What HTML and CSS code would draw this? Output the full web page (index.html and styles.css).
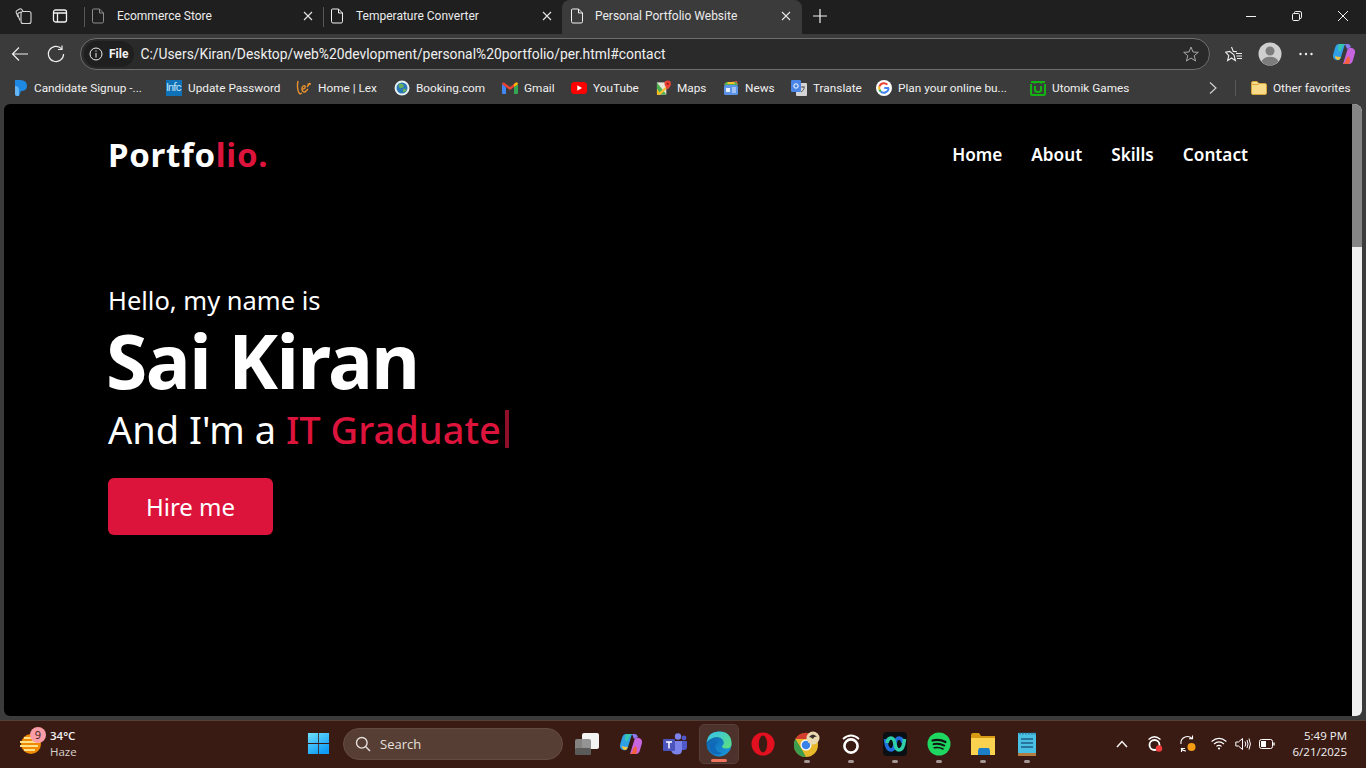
FILE: index.html
```html
<!DOCTYPE html>
<html lang="en">
<head>
    <meta charset="UTF-8">
    <meta name="viewport" content="width=device-width, initial-scale=1.0">
    <title>Personal Portfolio Website</title>
    <link rel="stylesheet" href="styles.css">
</head>
<body>
    <!-- Tab Strip -->
    <div class="tab-strip">
        <div class="strip-btn">
            <svg width="18" height="18" viewBox="0 0 18 18" fill="none" stroke="#d8d8d8" stroke-width="1.1"><rect x="6" y="4.5" width="10" height="12" rx="2"/><path d="M6 5 L3.5 6 Q2.4 6.6 2.8 7.8 L5 13.5"/><path d="M8 4.3 L6.5 2.2 Q5.6 1.4 4.6 2 L1.8 3.6 Q0.8 4.3 1.2 5.4 L3 10"/></svg>
        </div>
        <div class="strip-btn strip-btn-small">
            <svg width="16" height="16" viewBox="0 0 16 16" fill="none" stroke="#f2f2f2" stroke-width="1.3"><rect x="1.5" y="2" width="13" height="12" rx="2"/><path d="M1.5 5 H14.5 M5.5 5 V14"/></svg>
        </div>
        <div class="tab">
            <svg class="dim" width="14" height="16" viewBox="0 0 14 16" fill="none" stroke="currentColor" stroke-width="1"><path d="M2.5 1 H8.5 L12.5 5 V13.5 Q12.5 15 11 15 H3 Q1.5 15 1.5 13.5 V2 Q1.5 1 2.5 1 Z M8.5 1 V5 H12.5"/></svg>
            <span class="tab-title">Ecommerce Store</span>
            <svg class="tab-close" width="10" height="10" viewBox="0 0 10 10" stroke="#e6e6e6" stroke-width="1.1"><path d="M1 1 L9 9 M9 1 L1 9"/></svg>
        </div>
        <div class="tab">
            <svg width="14" height="16" viewBox="0 0 14 16" fill="none" stroke="currentColor" stroke-width="1"><path d="M2.5 1 H8.5 L12.5 5 V13.5 Q12.5 15 11 15 H3 Q1.5 15 1.5 13.5 V2 Q1.5 1 2.5 1 Z M8.5 1 V5 H12.5"/></svg>
            <span class="tab-title">Temperature Converter</span>
            <svg class="tab-close" width="10" height="10" viewBox="0 0 10 10" stroke="#e6e6e6" stroke-width="1.1"><path d="M1 1 L9 9 M9 1 L1 9"/></svg>
        </div>
        <div class="tab tab-active">
            <svg width="14" height="16" viewBox="0 0 14 16" fill="none" stroke="currentColor" stroke-width="1"><path d="M2.5 1 H8.5 L12.5 5 V13.5 Q12.5 15 11 15 H3 Q1.5 15 1.5 13.5 V2 Q1.5 1 2.5 1 Z M8.5 1 V5 H12.5"/></svg>
            <span class="tab-title">Personal Portfolio Website</span>
            <svg class="tab-close" width="10" height="10" viewBox="0 0 10 10" stroke="#e6e6e6" stroke-width="1.1"><path d="M1 1 L9 9 M9 1 L1 9"/></svg>
        </div>
        <div class="new-tab">
            <svg width="14" height="14" viewBox="0 0 14 14" stroke="#f2f2f2" stroke-width="1.2"><path d="M7 0 V14 M0 7 H14"/></svg>
        </div>
        <div class="window-controls">
            <svg width="10" height="10" viewBox="0 0 10 10" stroke="#f2f2f2" stroke-width="1"><path d="M0 5.5 H10"/></svg>
            <svg width="10" height="10" viewBox="0 0 10 10" fill="none" stroke="#f2f2f2" stroke-width="1"><rect x="0.5" y="2.5" width="7" height="7" rx="1.2"/><path d="M2.5 2.5 V1.5 Q2.5 0.5 3.5 0.5 H8 Q9.5 0.5 9.5 2 V6.5 Q9.5 7.5 8 7.5"/></svg>
            <svg width="10" height="10" viewBox="0 0 10 10" stroke="#f2f2f2" stroke-width="1"><path d="M0 0 L10 10 M10 0 L0 10"/></svg>
        </div>
    </div>

    <!-- Address Bar -->
    <div class="toolbar">
        <svg class="back-icon" width="18" height="16" viewBox="0 0 18 16" fill="none" stroke="#efefef" stroke-width="1.2"><path d="M17 8 H1.5 M8 1.5 L1.5 8 L8 14.5"/></svg>
        <svg class="reload-icon" width="18" height="18" viewBox="0 0 18 18" fill="none" stroke="#efefef" stroke-width="1.2"><path d="M14.6 3.8 A7.6 7.6 0 1 0 16.6 9"/><path d="M15 0.5 V4.5 H11"/></svg>
        <div class="address-bar">
            <div class="site-info">
                <svg width="14" height="14" viewBox="0 0 14 14" fill="none" stroke="#efefef" stroke-width="1"><circle cx="7" cy="7" r="6"/><path d="M7 6 V10.5 M7 3.5 V4.7"/></svg>
                <span>File</span>
            </div>
            <span class="url">C:/Users/Kiran/Desktop/web%20devlopment/personal%20portfolio/per.html#contact</span>
            <svg class="addr-star" width="16" height="16" viewBox="0 0 16 16" fill="none" stroke="#a8a8a8" stroke-width="1"><path d="M8 1 L10 6 L15.3 6.3 L11.2 9.7 L12.6 15 L8 12 L3.4 15 L4.8 9.7 L0.7 6.3 L6 6 Z"/></svg>
        </div>
        <div class="toolbar-icons">
            <svg width="18" height="16" viewBox="0 0 18 16" fill="none" stroke="#efefef" stroke-width="1.1"><path d="M6.5 1 L8.3 5.4 L12 5.8 M9 8.8 L10.4 14.6 L6.5 12 L2.6 14.6 L3.8 9.6 L0.6 6.2 L4.7 5.4 Z"/><path d="M11 7.5 H17 M11.5 10 H17 M12 12.5 H17"/></svg>
            <svg class="profile" width="24" height="24" viewBox="0 0 24 24"><circle cx="12" cy="12" r="11.5" fill="#cfcfcf"/><circle cx="12" cy="9" r="4.5" fill="#7c7c7c"/><path d="M3.5 19.5 Q5.5 14.8 12 14.8 Q18.5 14.8 20.5 19.5 Q16.5 23.5 12 23.5 Q7.5 23.5 3.5 19.5 Z" fill="#7c7c7c"/></svg>
            <svg width="14" height="4" viewBox="0 0 14 4" fill="#efefef"><circle cx="1.5" cy="2" r="1.2"/><circle cx="7" cy="2" r="1.2"/><circle cx="12.5" cy="2" r="1.2"/></svg>
            <svg class="copilot" width="24" height="22" viewBox="0 0 24 22"><path d="M7 1 H13 L9 14 Q8 18 4 17 Q0.5 16 1 12 L3 5 Q4 1 7 1 Z" fill="#2f9fe8"/><path d="M7 1 H13 Q10 3 9.5 7 L7 9 Q5 5 7 1 Z" fill="#36c6b0"/><path d="M11 21 H17 Q20 21 21 17 L23 10 Q23.5 6 20 5 Q16 4 15 8 L11 21 Z" fill="#c765e0"/><path d="M17 21 H11 Q14 19 14.5 15 L17 13 Q19 17 17 21 Z" fill="#f2603f"/><path d="M13 1 H16 Q18 1 19 4 L15 6 Z" fill="#8a7bf0"/><path d="M3 13 Q3 17 7 17 L9 14 Q5 14 3 13 Z" fill="#f7c23c"/></svg>
        </div>
    </div>

    <!-- Favorites Bar -->
    <div class="favorites">
        <div class="fav">
            <svg width="14" height="16" viewBox="0 0 14 16"><path d="M1 0 H6 Q13 0 13 6 Q13 11 7 11 L5 16 H3 Q1 16 1 14 Z" fill="#1e88e5"/><path d="M1 6 Q5 6 5 10 V16 H3 Q1 16 1 14 Z" fill="#64b5f6"/></svg>
            <span>Candidate Signup -...</span>
        </div>
        <div class="fav">
            <span class="info-logo">Infc</span>
            <span>Update Password</span>
        </div>
        <div class="fav">
            <svg width="16" height="16" viewBox="0 0 16 16" fill="none" stroke="#e8912d" stroke-width="1.4"><path d="M2 1 Q0.5 8 3 13 Q4 14.5 6 13"/><path d="M6 9 Q10 9 9 6 Q7 5 6 8 Q5.5 12 9 12 L12 9"/><path d="M11 7 L14 3 M11.5 4 H15"/></svg>
            <span>Home | Lex</span>
        </div>
        <div class="fav">
            <svg width="16" height="16" viewBox="0 0 16 16"><circle cx="8" cy="8" r="7.5" fill="#e8f1f2"/><circle cx="8" cy="8" r="5.5" fill="#2b78b8"/><path d="M5 4 Q9 3 10 6 Q8 9 6 8 Q4 7 5 4 Z M9 9 Q12 8 12.5 10 Q11 13 9 12 Z" fill="#66b15a"/></svg>
            <span>Booking.com</span>
        </div>
        <div class="fav">
            <svg width="16" height="12" viewBox="0 0 16 12"><path d="M0 2 L4 5 V12 H1 Q0 12 0 11 Z" fill="#4285f4"/><path d="M12 5 L16 2 V11 Q16 12 15 12 H12 Z" fill="#34a853"/><path d="M0 2 Q0 0 2 0.5 L8 5 L14 0.5 Q16 0 16 2 L8 8 Z" fill="#ea4335"/><path d="M12 5 L16 2 Q16 0 14 0.5 L12 2 Z" fill="#fbbc04"/></svg>
            <span>Gmail</span>
        </div>
        <div class="fav">
            <svg width="16" height="12" viewBox="0 0 16 12"><rect width="16" height="12" rx="3.5" fill="#f00"/><path d="M6.3 3.3 L11 6 L6.3 8.7 Z" fill="#fff"/></svg>
            <span>YouTube</span>
        </div>
        <div class="fav">
            <svg width="15" height="16" viewBox="0 0 16 16"><path d="M1 2 H11 V15 H1 Z" fill="#e8e4d8"/><path d="M1 2 L11 15 H5 L1 9 Z" fill="#4caf50"/><path d="M1 9 L5 15 H1 Z" fill="#fbbc04"/><path d="M1 15 L11 6 V9 L5 15 Z" fill="#fbc02d"/><path d="M12.5 0 Q16 0 16 3.5 Q16 6 12.5 9.5 Q9 6 9 3.5 Q9 0 12.5 0 Z" fill="#ea4335"/><circle cx="12.5" cy="3.5" r="1.2" fill="#8c1a12"/></svg>
            <span>Maps</span>
        </div>
        <div class="fav">
            <svg width="16" height="14" viewBox="0 0 16 14"><path d="M2 2 L14 0 L15 4 H1 Z" fill="#e8543f"/><path d="M1 4 L3 1 H13 L15 4 Z" fill="#4caf50"/><path d="M5 1 H11 L12 3 H4 Z" fill="#fbc02d"/><rect x="1" y="4" width="14" height="10" rx="1.5" fill="#5b93e8"/><rect x="3" y="7" width="4" height="4" fill="#e8f0fd"/><path d="M9 7 H13 M9 9 H13 M9 11 H13" stroke="#e8f0fd"/></svg>
            <span>News</span>
        </div>
        <div class="fav">
            <svg width="16" height="16" viewBox="0 0 16 16"><rect x="5" y="3" width="11" height="13" rx="1" fill="#d5d5d5"/><rect width="10" height="12" rx="1.2" fill="#4a86e8"/><circle cx="5" cy="6" r="2.2" fill="none" stroke="#fff"/><path d="M10 7 H14 M12 6 V8 M13.5 7.5 Q12.5 11 10 12" stroke="#666" fill="none"/></svg>
            <span>Translate</span>
        </div>
        <div class="fav">
            <svg width="16" height="16" viewBox="0 0 16 16"><circle cx="8" cy="8" r="8" fill="#fff"/><path d="M13 8 H8.2 M12.6 8.2 A4.8 4.8 0 0 1 4.8 11.6" fill="none" stroke="#4285f4" stroke-width="2"/><path d="M4.8 11.6 Q3.9 10.6 3.4 9.5" fill="none" stroke="#34a853" stroke-width="2"/><path d="M3.4 9.5 Q3 8 3.4 6.5" fill="none" stroke="#fbbc04" stroke-width="2"/><path d="M3.4 6.5 A4.8 4.8 0 0 1 11.4 4.6" fill="none" stroke="#ea4335" stroke-width="2"/></svg>
            <span>Plan your online bu...</span>
        </div>
        <div class="fav">
            <svg width="16" height="16" viewBox="0 0 16 16" fill="none" stroke="#12b312" stroke-width="2"><path d="M1 4 V14 Q1 15 2 15 H14 Q15 15 15 14 V4 M5 1 V2 Q5 3 4 3 M11 1 V2 Q11 3 12 3 M1 2 H15 M5 6 V10 Q5 12 8 12 Q11 12 11 10 V6"/></svg>
            <span>Utomik Games</span>
        </div>
        <svg class="fav-more" width="8" height="12" viewBox="0 0 8 12" fill="none" stroke="#d0d0d0" stroke-width="1.2"><path d="M1 0.5 L7 6 L1 11.5"/></svg>
        <div class="fav-sep"></div>
        <div class="fav">
            <svg width="16" height="14" viewBox="0 0 16 14"><path d="M0.5 2 Q0.5 0.5 2 0.5 H6 L8 2.5 H14 Q15.5 2.5 15.5 4 V12 Q15.5 13.5 14 13.5 H2 Q0.5 13.5 0.5 12 Z" fill="#f8dc8a" stroke="#d6a63c"/><path d="M1 3.5 H7.5" stroke="#d6a63c"/></svg>
            <span>Other favorites</span>
        </div>
    </div>

    <!-- Page Viewport -->
    <div class="viewport">
        <div class="page">
            <header class="navbar">
                <a class="logo" href="#">Portfo<span>lio.</span></a>
                <nav class="menu">
                    <a href="#">Home</a>
                    <a href="#">About</a>
                    <a href="#">Skills</a>
                    <a href="#">Contact</a>
                </nav>
            </header>
            <section class="hero">
                <div class="hello">Hello, my name is</div>
                <div class="name">Sai Kiran</div>
                <div class="role">And I'm a <span class="typed">IT Graduate</span><span class="cursor"></span></div>
                <a class="hire" href="#">Hire me</a>
            </section>
        </div>
        <div class="scrollbar"><div class="scroll-thumb"></div></div>
    </div>

    <!-- Taskbar -->
    <footer class="taskbar">
        <div class="weather">
            <div class="weather-icon">
                <svg width="22" height="20" viewBox="0 0 22 20"><circle cx="12" cy="10" r="10" fill="#f08a00"/><path d="M5 4 H20 M1 8 H21 M1 12 H19 M5 16 H16" stroke="#ffe08a" stroke-width="1.8"/></svg>
                <span class="weather-badge">9</span>
            </div>
            <div class="weather-text">
                <span class="temp">34°C</span>
                <span class="haze">Haze</span>
            </div>
        </div>
        <div class="task-center">
            <div class="task-btn">
                <svg width="23" height="23" viewBox="0 0 24 24"><defs><linearGradient id="win" x1="0" y1="0" x2="0.6" y2="1"><stop offset="0" stop-color="#6fe0ff"/><stop offset="1" stop-color="#0f9bf5"/></linearGradient></defs><path d="M1 1 H11.6 V11.6 H1 Z M12.4 1 H23 V11.6 H12.4 Z M1 12.4 H11.6 V23 H1 Z M12.4 12.4 H23 V23 H12.4 Z" fill="url(#win)"/></svg>
            </div>
            <div class="search">
                <svg width="16" height="16" viewBox="0 0 16 16" fill="none" stroke="#e6e0dc" stroke-width="1.4"><circle cx="6.8" cy="6.8" r="5.3"/><path d="M10.8 10.8 L15 15"/></svg>
                <span>Search</span>
            </div>
            <div class="task-btn">
                <svg width="24" height="22" viewBox="0 0 24 22"><rect x="7" y="0" width="17" height="16" rx="2" fill="#f4f4f4"/><rect x="0" y="6" width="16" height="16" rx="2" fill="#8b8b8b" opacity=".92"/><rect x="0" y="15" width="16" height="7" rx="2" fill="#5a5a5a"/></svg>
            </div>
            <div class="task-btn">
                <svg width="24" height="22" viewBox="0 0 24 22"><path d="M7 1 H13 L9 14 Q8 18 4 17 Q0.5 16 1 12 L3 5 Q4 1 7 1 Z" fill="#2f9fe8"/><path d="M7 1 H13 Q10 3 9.5 7 L7 9 Q5 5 7 1 Z" fill="#36c6b0"/><path d="M11 21 H17 Q20 21 21 17 L23 10 Q23.5 6 20 5 Q16 4 15 8 L11 21 Z" fill="#c765e0"/><path d="M17 21 H11 Q14 19 14.5 15 L17 13 Q19 17 17 21 Z" fill="#f2603f"/><path d="M13 1 H16 Q18 1 19 4 L15 6 Z" fill="#8a7bf0"/><path d="M3 13 Q3 17 7 17 L9 14 Q5 14 3 13 Z" fill="#f7c23c"/></svg>
            </div>
            <div class="task-btn">
                <svg width="24" height="22" viewBox="0 0 24 22"><circle cx="15" cy="3.5" r="3.2" fill="#7b83eb"/><circle cx="21" cy="5" r="2.4" fill="#5059c9"/><path d="M17 8 H24 V14 Q24 17 21 17 H17 Z" fill="#5059c9"/><path d="M8 8 H19 V17 Q19 21.5 14 21.5 Q9 21.5 8 17 Z" fill="#7b83eb"/><rect x="0" y="6" width="12" height="12" rx="1" fill="#4b53bc"/><path d="M3 9 H9 M6 9 V15.5" stroke="#fff" stroke-width="1.5"/></svg>
            </div>
            <div class="task-btn task-active">
                <svg width="26" height="26" viewBox="0 0 26 26"><defs><linearGradient id="edgeB" x1="0" y1="0" x2="1" y2="1"><stop offset="0" stop-color="#0c59a4"/><stop offset="1" stop-color="#1b9de2"/></linearGradient><linearGradient id="edgeG" x1="0" y1="0" x2="1" y2="1"><stop offset="0" stop-color="#35c1f1"/><stop offset="1" stop-color="#5ee07a"/></linearGradient></defs><circle cx="13" cy="13" r="12.5" fill="url(#edgeB)"/><path d="M0.6 11 Q2 0.5 13 0.5 Q25.5 0.5 25.5 13 Q25.5 17.5 20 17.5 Q16 17.5 16 15 Q19 13 17 9 Q14 5 8 6.5 Q3 8 0.6 11 Z" fill="url(#edgeG)"/><path d="M9 15 Q9 21 16 22 Q11 25 6 22 Q3 19 4.5 14 Q7 10 12 10 Q9 12 9 15 Z" fill="#1068b8"/></svg>
                <span class="active-pill"></span>
            </div>
            <div class="task-btn">
                <svg width="24" height="24" viewBox="0 0 24 24"><circle cx="12" cy="12" r="11.5" fill="#e3101f"/><ellipse cx="12" cy="12" rx="4.2" ry="8.5" fill="#3a1c14"/></svg>
            </div>
            <div class="task-btn task-open">
                <svg width="26" height="26" viewBox="0 0 26 26"><circle cx="12" cy="14" r="12" fill="#e8b82c"/><path d="M1.5 8 A12 12 0 0 1 22.5 8 H12 Z" fill="#d23d2f"/><path d="M12 26 A12 12 0 0 1 1.5 8 L7 17 Z" fill="#3c9d4e"/><circle cx="12" cy="14" r="5.5" fill="#fff"/><circle cx="12" cy="14" r="4.3" fill="#3b82e8"/><circle cx="19" cy="7" r="6.5" fill="#e9d9b0"/><path d="M15 6 Q19 1 23 6 Q20 5 19 8 Q17 6 15 6 Z" fill="#3a2f2a"/></svg>
            </div>
            <div class="task-btn task-open">
                <svg width="18" height="22" viewBox="0 0 18 22" fill="none" stroke="#fff" stroke-width="2.6"><circle cx="9" cy="13" r="6.6"/><path d="M1 6 Q9 -1 17 6" stroke-width="1.8"/></svg>
            </div>
            <div class="task-btn task-open">
                <svg width="24" height="24" viewBox="0 0 24 24" fill="none"><rect width="24" height="24" rx="4" fill="#0a0f14"/><path d="M2.5 7 Q3.5 18 8 18 Q11 18 12 12 Q13 6 16 6 Q19 6 20 11" stroke="#1f6fe0" stroke-width="3.6"/><path d="M21.5 7 Q20.5 18 16 18 Q13 18 12 12 Q11 6 8 6 Q5 6 4 11" stroke="#2fd0a8" stroke-width="3.6"/></svg>
            </div>
            <div class="task-btn task-open">
                <svg width="24" height="24" viewBox="0 0 24 24" fill="none" stroke="#111" stroke-linecap="round"><circle cx="12" cy="12" r="11.5" fill="#1ed760" stroke="none"/><path d="M5.5 8.5 Q12 6.5 18.5 10" stroke-width="2.2"/><path d="M6.5 12.2 Q12 10.8 17.3 13.6" stroke-width="1.9"/><path d="M7.2 15.8 Q12 14.6 16 17" stroke-width="1.5"/></svg>
            </div>
            <div class="task-btn task-open">
                <svg width="24" height="22" viewBox="0 0 24 22"><path d="M0 2 Q0 0 2 0 H8 L10 3 H24 V21 H0 Z" fill="#d69a15"/><path d="M0 5 H24 V22 H0 Z" fill="#fad24f"/><path d="M7 19 Q7 15 9 15 H17 Q19 15 19 19 V22 H7 Z" fill="#1c7ec6"/></svg>
            </div>
            <div class="task-btn task-open">
                <svg width="18" height="24" viewBox="0 0 18 24"><rect y="1" width="18" height="23" fill="#48bfe3"/><rect y="21" width="18" height="3" fill="#b67b3f"/><path d="M3 7 H15 M3 11 H15 M3 15 H15" stroke="#1c5d85" stroke-width="1.6"/><path d="M2 0 V2.5 M5 0 V2.5 M8 0 V2.5 M11 0 V2.5 M14 0 V2.5 M17 0 V2.5" stroke="#1c5d85"/></svg>
            </div>
        </div>
        <div class="tray">
            <svg width="12" height="8" viewBox="0 0 12 8" fill="none" stroke="#f4f4f4" stroke-width="1.5"><path d="M1 7 L6 1.5 L11 7"/></svg>
            <svg class="tray-obs" width="16" height="18" viewBox="0 0 16 18" fill="none" stroke="#fff" stroke-width="1.8"><circle cx="7.5" cy="10" r="5"/><path d="M1.5 4.5 Q7.5 -1 13.5 4.5" stroke-width="1.2"/><circle cx="12" cy="13.5" r="3.2" fill="#f23b3b" stroke="none"/></svg>
            <svg class="tray-sync" width="18" height="18" viewBox="0 0 18 18" fill="none" stroke="#fff" stroke-width="1.1"><path d="M2 9 A6.5 6.5 0 0 1 13 3.5 M13.5 0.5 V3.8 H10"/><path d="M2 13 A6 6 0 0 0 7 16 M2.5 17 V13.5 H6"/><circle cx="12.5" cy="12" r="4" fill="#f59c12" stroke="none"/></svg>
            <svg class="tray-wifi" width="16" height="13" viewBox="0 0 16 13" fill="none" stroke="#fff" stroke-width="1.1"><path d="M0.6 4.5 Q8 -1.8 15.4 4.5 M3 7 Q8 2.8 13 7 M5.4 9.4 Q8 7.4 10.6 9.4"/><circle cx="8" cy="11.5" r="1.1" fill="#fff" stroke="none"/></svg>
            <svg class="tray-vol" width="16" height="14" viewBox="0 0 16 14" fill="none" stroke="#fff" stroke-width="1"><path d="M0.8 5 H3.5 L7.5 1.5 V12.5 L3.5 9 H0.8 Z M10 4.5 Q11.5 7 10 9.5 M12 3 Q14 7 12 11 M14 1.5 Q16.8 7 14 12.5"/></svg>
            <svg class="tray-bat" width="16" height="10" viewBox="0 0 16 10" fill="none" stroke="#fff" stroke-width="1"><rect x="0.5" y="0.5" width="13" height="9" rx="2"/><rect x="2" y="2" width="5" height="6" fill="#fff" stroke="none"/><path d="M15 3.5 V6.5" stroke-width="1.4"/></svg>
            <div class="clock">
                <span>5:49 PM</span>
                <span>6/21/2025</span>
            </div>
        </div>
    </footer>
</body>
</html>
```

FILE: styles.css
```css
/* Basic Reset */
* {
    box-sizing: border-box;
    margin: 0;
    padding: 0;
}

body {
    width: 1366px;
    height: 768px;
    overflow: hidden;
    display: flex;
    flex-direction: column;
    background-color: #3b3b3b;
    font-family: Roboto, "Open Sans", sans-serif;
    color: #f2f2f2;
}

svg {
    display: block;
    flex-shrink: 0;
}

/* Tab Strip */
.tab-strip {
    height: 34px;
    display: flex;
    align-items: stretch;
    background-color: #1f1f1f;
    padding-left: 2px;
}

.strip-btn {
    width: 44px;
    display: flex;
    align-items: center;
    justify-content: center;
    padding-bottom: 2px;
}

.strip-btn-small {
    width: 28px;
    margin-right: 10px;
}

.tab {
    position: relative;
    width: 239px;
    display: flex;
    align-items: center;
    padding-left: 7px;
    padding-right: 10px;
    padding-bottom: 2px;
    color: #f2f2f2;
}

/* Thin separator in front of the inactive tabs */
.tab:not(.tab-active)::before {
    content: "";
    position: absolute;
    left: 0;
    top: 7px;
    width: 1px;
    height: 20px;
    background-color: #555;
}

.tab-active {
    width: 240px;
    padding-left: 8px;
    padding-right: 11px;
    background-color: #3b3b3b;
    border-radius: 8px 8px 0 0;
}

.tab .dim {
    color: #8c8c8c;
}

.tab-title {
    flex: 1;
    margin-left: 12px;
    font-size: 12px;
    white-space: nowrap;
    color: #ececec;
}

.tab-active .tab-title {
    margin-left: 11px;
}

.new-tab {
    width: 36px;
    display: flex;
    align-items: center;
    justify-content: center;
    padding-bottom: 2px;
}

.window-controls {
    margin-left: auto;
    width: 138px;
    padding: 0 18px 2px 18px;
    display: flex;
    align-items: center;
    justify-content: space-between;
}

/* Address Bar */
.toolbar {
    height: 36px;
    display: flex;
    align-items: center;
    background-color: #3b3b3b;
    padding-left: 11px;
    padding-top: 4px;
}

.reload-icon {
    margin-left: 18px;
}

.address-bar {
    width: 1130px;
    height: 32px;
    margin-left: 15px;
    display: flex;
    align-items: center;
    padding: 0 10px 0 3px;
    background-color: #2a2a2a;
    border: 1px solid #6e6e6e;
    border-radius: 16px;
}

.site-info {
    height: 26px;
    display: flex;
    align-items: center;
    gap: 6px;
    padding: 0 6px 0 5px;
    background-color: #1f1f1f;
    border-radius: 13px;
    font-size: 12px;
    font-weight: 700;
}

.url {
    flex: 1;
    margin-left: 6px;
    font-size: 13.85px;
    white-space: nowrap;
    color: #f0f0f0;
}

.toolbar-icons {
    margin-left: 15px;
    display: flex;
    align-items: center;
}

.toolbar-icons svg:nth-child(1) { margin-right: 15px; }
.toolbar-icons svg:nth-child(2) { margin-right: 17px; }
.toolbar-icons svg:nth-child(3) { margin-right: 19px; }

/* Favorites Bar */
.favorites {
    height: 34px;
    display: grid;
    grid-template-columns: 152px 130px 98px 108px 69px 85px 67px 68px 85px 154px 179px 26px 16px 1fr;
    align-items: center;
    padding-left: 14px;
    padding-top: 2px;
    background-color: #3b3b3b;
    font-size: 11.8px;
}

.fav {
    display: flex;
    align-items: center;
    gap: 6px;
    white-space: nowrap;
    color: #f0f0f0;
}

.info-logo {
    width: 16px;
    height: 16px;
    background-color: #0f71b8;
    color: #bfe0f5;
    font-size: 11px;
    letter-spacing: -1px;
    line-height: 16px;
}

.fav-sep {
    width: 1px;
    height: 16px;
    background-color: #585858;
}

/* Page Viewport */
.viewport {
    height: 612px;
    display: flex;
    margin: 0 4px;
}

.page {
    flex: 1;
    background-color: #000;
    color: #fff;
    border-top-left-radius: 6px;
    border-bottom-left-radius: 6px;
    padding: 0 104px;
    font-family: "Noto Sans", "Open Sans", sans-serif;
}

.navbar {
    height: 102px;
    padding-bottom: 2px;
    display: flex;
    align-items: center;
    justify-content: space-between;
}

.logo {
    color: #fff;
    text-decoration: none;
    font-size: 33px;
    font-weight: 700;
    letter-spacing: 0.7px;
}

.logo span {
    color: crimson;
}

.menu {
    display: flex;
    gap: 29px;
}

.menu a {
    color: #fff;
    text-decoration: none;
    font-size: 17.2px;
    font-weight: 600;
}

.hero {
    padding-top: 75px;
}

.hello {
    font-size: 25.5px;
    line-height: 38px;
}

.name {
    font-size: 75px;
    font-weight: 700;
    line-height: 82px;
    margin-bottom: 2px;
    margin-left: -2px;
    letter-spacing: -1.5px;
}

.role {
    font-size: 38px;
    line-height: 52px;
    display: flex;
    align-items: center;
    white-space: pre;
}

.typed {
    color: crimson;
    font-weight: 500;
}

.cursor {
    width: 4px;
    height: 38px;
    margin-left: 4px;
    background-color: #8e0f29;
}

.hire {
    width: 165px;
    height: 57px;
    margin-top: 23px;
    padding-bottom: 1px;
    display: flex;
    align-items: center;
    justify-content: center;
    background-color: crimson;
    border-radius: 6px;
    color: #fff;
    text-decoration: none;
    font-size: 24px;
}

.scrollbar {
    width: 10px;
    background-color: #f0f0f0;
    border-top-right-radius: 8px;
    border-bottom-right-radius: 6px;
    overflow: hidden;
}

.scroll-thumb {
    height: 143px;
    background-color: #858585;
}

/* Taskbar */
.taskbar {
    height: 48px;
    margin-top: 4px;
    display: flex;
    align-items: center;
    background-color: #391b14;
    border-top: 1px solid #544038;
    padding-bottom: 2px;
    font-family: "Open Sans", Roboto, sans-serif;
}

.weather {
    width: 296px;
    display: flex;
    align-items: center;
    padding-left: 17px;
}

.weather-icon {
    position: relative;
    width: 26px;
    height: 26px;
    padding: 3px 0 0 2px;
}

.weather-badge {
    position: absolute;
    top: -4px;
    right: -3px;
    width: 16px;
    height: 16px;
    border-radius: 50%;
    background-color: #fb9da6;
    color: #3a1c14;
    text-align: center;
    font-size: 11px;
    line-height: 16px;
}

.weather-text {
    margin-left: 7px;
    display: flex;
    flex-direction: column;
    font-size: 11.5px;
    line-height: 16px;
}

.temp {
    font-weight: 600;
}

.haze {
    color: #d8d2ce;
}

.task-center {
    display: flex;
    align-items: center;
}

.task-btn {
    position: relative;
    width: 44px;
    height: 40px;
    display: flex;
    align-items: center;
    justify-content: center;
    border-radius: 5px;
}

.task-btn:first-child {
    margin-right: 3px;
}

.task-active {
    background-color: #4d322b;
    border: 1px solid #573e37;
    width: 40px;
    margin: 0 2px;
}

.active-pill {
    position: absolute;
    bottom: 1px;
    left: 11px;
    width: 16px;
    height: 3px;
    border-radius: 2px;
    background-color: #f0735c;
}

.task-open::after {
    content: "";
    position: absolute;
    bottom: 1px;
    left: 19px;
    width: 6px;
    height: 3px;
    border-radius: 2px;
    background-color: #a39692;
}

.search {
    width: 220px;
    height: 32px;
    margin-right: 2px;
    display: flex;
    align-items: center;
    gap: 9px;
    padding-left: 11px;
    background-color: #563e35;
    border: 1px solid #644b42;
    border-radius: 16px;
    font-size: 13px;
    color: #e6e0dc;
}

.tray {
    margin-left: auto;
    width: 252px;
    padding-left: 2px;
    display: flex;
    align-items: center;
}

.tray-obs { margin-left: 19px; }
.tray-sync { margin-left: 16px; }
.tray-wifi { margin-left: 14px; }
.tray-vol { margin-left: 8px; }
.tray-bat { margin-left: 8px; }

.clock {
    margin-left: auto;
    padding-right: 19px;
    display: flex;
    flex-direction: column;
    align-items: flex-end;
    font-size: 11.5px;
    line-height: 16px;
}
```
